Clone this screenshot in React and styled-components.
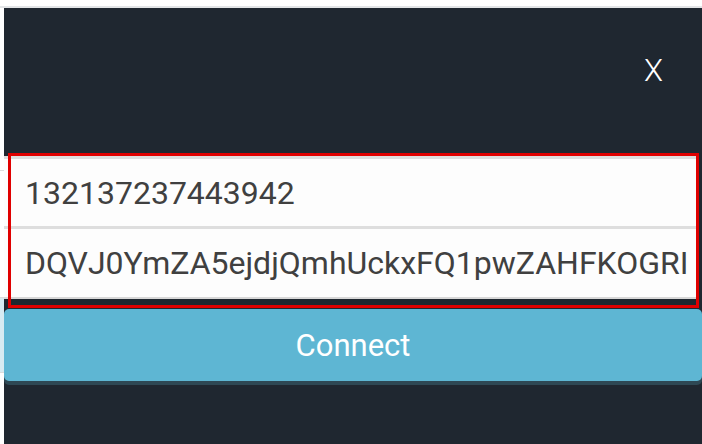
import React, { useState } from 'react';
import styled, { createGlobalStyle } from 'styled-components';

const GlobalStyle = createGlobalStyle`
  html, body {
    margin: 0;
    padding: 0;
    background: #ffffff;
    overflow: hidden;
  }
  body {
    font-family: Roboto, "Liberation Sans", Arial, sans-serif;
  }
`;

const Page = styled.div`
  position: relative;
  width: 702px;
  height: 444px;
  padding-top: 6px;
  box-sizing: border-box;
  background: #ffffff;
`;

const TopRule = styled.div`
  height: 2px;
  background: #e3e5e7;
`;

const Backdrop = styled.div`
  display: flex;
  height: 436px;
`;

const Gutter = styled.div`
  width: 4px;
  flex: none;
  display: flex;
  flex-direction: column;
`;

const GutterRow = styled.div`
  height: ${p => p.$h}px;
  flex: none;
  border-bottom: 1px solid #dcdcdc;
  background: ${p => p.$tint || '#ffffff'};
`;

const Panel = styled.div`
  flex: 1;
  display: flex;
  flex-direction: column;
  background: #1f2730;
`;

const Header = styled.div`
  height: 145px;
  display: flex;
  align-items: center;
  justify-content: flex-end;
  padding-right: 39px;
  box-sizing: border-box;
  padding-bottom: 20px;
`;

const Close = styled.button`
  background: none;
  border: none;
  padding: 0;
  color: #ffffff;
  font-family: Roboto, "Liberation Sans", Arial, sans-serif;
  font-size: 31px;
  font-weight: 300;
  line-height: 1;
  cursor: pointer;
`;

const Form = styled.div`
  position: relative;
  display: flex;
  flex-direction: column;
  padding: 3px 0 9px 0;

  &::after {
    content: '';
    position: absolute;
    left: 4px;
    right: 3px;
    top: 0;
    bottom: 0;
    border: 3px solid #e00000;
    pointer-events: none;
  }
`;

const Field = styled.input`
  display: block;
  width: 693px;
  height: ${p => (p.$last ? 73 : 70)}px;
  box-sizing: border-box;
  margin: 0;
  border: none;
  border-top: 3px solid #dedede;
  border-bottom: ${p => (p.$last ? '2px solid #d8d8d8' : 'none')};
  background: #fdfdfd;
  padding: 0 0 0 21px;
  font-family: Roboto, "Liberation Sans", Arial, sans-serif;
  font-size: 32px;
  color: #404040;
  outline: none;
`;

const ConnectButton = styled.button`
  margin-top: 1px;
  height: 72px;
  width: 100%;
  border: none;
  border-radius: 5px;
  background: #5eb6d3;
  box-shadow: 0 4px 0 #2e4854;
  color: #ffffff;
  font-family: Roboto, "Liberation Sans", Arial, sans-serif;
  font-size: 31px;
  cursor: pointer;
`;

export default function App() {
  const [pageId, setPageId] = useState('132137237443942');
  const [token, setToken] = useState('DQVJ0YmZA5ejdjQmhUckxFQ1pwZAHFKOGRI');

  return (
    <Page>
      <GlobalStyle />
      <TopRule />
      <Backdrop>
        <Gutter>
          <GutterRow $h={162} />
          <GutterRow $h={126} />
          <GutterRow $h={74} $tint="#d7ebf2" />
        </Gutter>
        <Panel>
          <Header>
            <Close>X</Close>
          </Header>
          <Form>
            <Field value={pageId} onChange={e => setPageId(e.target.value)} />
            <Field $last value={token} onChange={e => setToken(e.target.value)} />
          </Form>
          <ConnectButton>Connect</ConnectButton>
        </Panel>
      </Backdrop>
    </Page>
  );
}
